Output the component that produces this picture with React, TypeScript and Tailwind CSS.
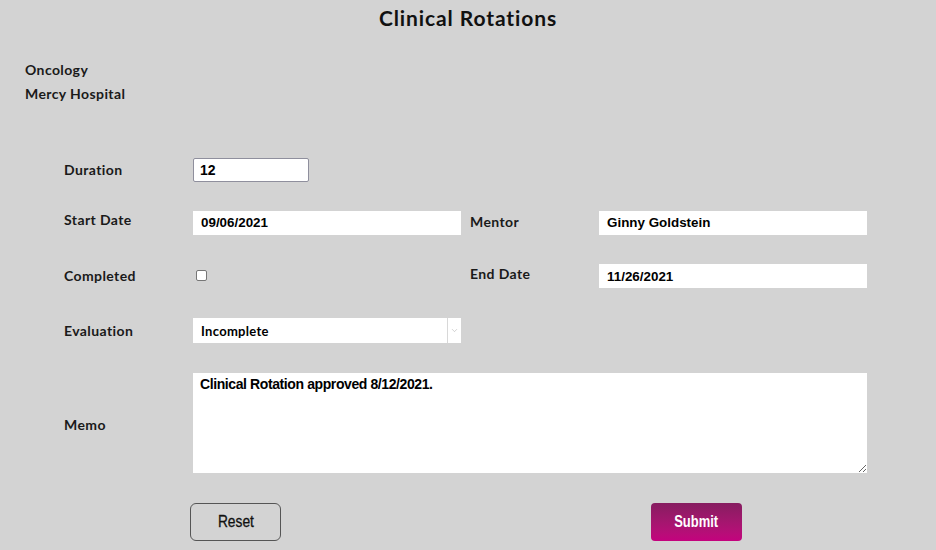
import { ChevronDown } from 'lucide-react';

const label = "text-[14px] font-bold tracking-[0.4px] text-[#1a1a1a] [font-family:Lato,'Noto_Sans',sans-serif]";
const field = "h-6 bg-white px-2 text-[13.4px] font-bold text-black [font-family:'Liberation_Sans',Arial,sans-serif] outline-none";

export default function App() {
  return (
    <div className="w-[936px] h-[550px] overflow-hidden bg-[#d3d3d3] [font-family:Lato,sans-serif]">
      <h1 className="pt-[4px] text-center text-[21px] leading-[28px] font-bold tracking-[0.9px] text-[#111]">Clinical Rotations</h1>

      <div className="mt-[29px] pl-[25px] flex flex-col gap-[6px]">
        <div className={label + " leading-[18px]"}>Oncology</div>
        <div className={label + " leading-[18px]"}>Mercy Hospital</div>
      </div>

      <div className="mt-[54px] pl-[64px] grid grid-cols-[129px_268px_9px_129px_268px] items-center">
        {/* Duration */}
        <div className={label + " h-6 flex items-center"}>Duration</div>
        <div>
          <input defaultValue="12" className={field + " w-[116px] text-[14px] border border-[#8f8f9d] rounded-[2px] px-[6px]"} />
        </div>
        <div />
        <div />
        <div />

        {/* Start date / Mentor */}
        <div className={label + " mt-[27px] -translate-y-[2px]"}>Start Date</div>
        <div className="mt-[27px]"><input defaultValue="09/06/2021" className={field + " w-[268px]"} /></div>
        <div className="mt-[27px]" />
        <div className={label + " mt-[27px]"}>Mentor</div>
        <div className="mt-[27px]"><input defaultValue="Ginny Goldstein" className={field + " w-[268px]"} /></div>

        {/* Completed / End date */}
        <div className={label + " mt-[28px]"}>Completed</div>
        <div className="mt-[28px] flex items-center h-6 pl-[3px]">
          <input type="checkbox" className="w-[11px] h-[11px] appearance-none bg-white border border-[#767676] rounded-[2px]" />
        </div>
        <div className="mt-[28px]" />
        <div className={label + " mt-[28px] -translate-y-[2px]"}>End Date</div>
        <div className="mt-[28px]"><input defaultValue="11/26/2021" className={field + " w-[268px]"} /></div>

        {/* Evaluation */}
        <div className={label + " mt-[30px]"}>Evaluation</div>
        <div className="mt-[30px] w-[268px] h-[25px] bg-white flex items-center">
          <span className="flex-1 pl-2 pt-[2px] text-[13px] font-bold tracking-[0.3px] text-black [font-family:Lato,sans-serif]">Incomplete</span>
          <span className="w-[14px] h-full border-l border-[#d8d8d8] flex items-center justify-center">
            <ChevronDown size={9} strokeWidth={1.5} className="text-[#b0b0b0]" />
          </span>
        </div>
        <div className="mt-[30px]" />
        <div className="mt-[30px]" />
        <div className="mt-[30px]" />

        {/* Memo */}
        <div className={label + " mt-[30px] translate-y-[1px]"}>Memo</div>
        <div className="mt-[30px] col-span-4">
          <textarea
            defaultValue="Clinical Rotation approved 8/12/2021."
            className="block w-[674px] h-[100px] bg-white px-[7px] py-[1px] text-[14px] font-bold text-black [font-family:'Liberation_Sans',Arial,sans-serif] tracking-[-0.4px] outline-none resize"
          />
        </div>
      </div>

      <div className="mt-[30px] pl-[190px] flex items-center">
        <button className="w-[91px] h-[38px] rounded-[6px] border border-[#555] bg-transparent flex items-center justify-center text-[16px] text-[#111] [font-family:'Liberation_Sans',sans-serif]">
          <span className="inline-block scale-x-[0.86] [-webkit-text-stroke:0.3px_#111]">Reset</span>
        </button>
        <button className="ml-[370px] w-[91px] h-[38px] rounded-[4px] bg-gradient-to-b from-[#861c60] to-[#c4027e] flex items-center justify-center text-[16px] font-bold text-white [font-family:'Liberation_Sans',sans-serif]">
          <span className="inline-block scale-x-[0.81]">Submit</span>
        </button>
      </div>
    </div>
  );
}
